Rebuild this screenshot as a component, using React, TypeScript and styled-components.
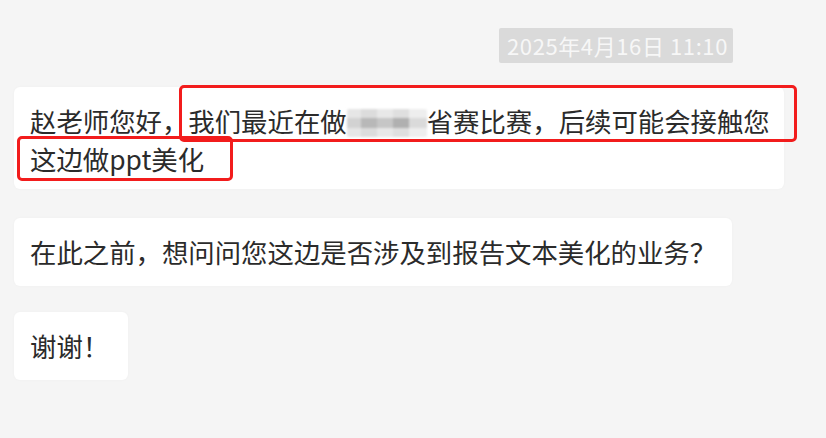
import React from "react";
import styled, { createGlobalStyle } from "styled-components";

const Global = createGlobalStyle`
  html, body { margin: 0; padding: 0; background: #f5f5f5; }
  body { font-family: "Noto Sans CJK SC", "Noto Sans", sans-serif; }
`;

const Page = styled.div`
  width: 826px;
  height: 438px;
  box-sizing: border-box;
  padding: 28px 0 0 14px;
  display: flex;
  flex-direction: column;
  align-items: flex-start;
  background: #f5f5f5;
  overflow: hidden;
`;

const TimeRow = styled.div`
  align-self: stretch;
  display: flex;
  justify-content: flex-end;
  padding-right: 93px;
  margin-bottom: 24px;
`;

const TimePill = styled.div`
  background: #dadada;
  color: #f7f7f7;
  font-size: 22px;
  letter-spacing: 0.6px;
  line-height: 35px;
  height: 35px;
  padding: 0 5px 0 8px;
  border-radius: 2px;
  white-space: nowrap;
`;

const Bubble = styled.div<{ $gap: number; $padR?: number; $padT?: number; $padB?: number }>`
  position: relative;
  background: #ffffff;
  border-radius: 6px;
  color: #2b2b2b;
  font-size: 26.4px;
  line-height: 38px;
  padding: ${(p) => p.$padT ?? 15}px ${(p) => p.$padR ?? 16}px ${(p) => p.$padB ?? 15}px 16px;
  margin-bottom: ${(p) => p.$gap}px;
  white-space: nowrap;
  box-shadow: 0 0 3px rgba(0, 0, 0, 0.03);
`;

const Mosaic = styled.span`
  display: inline-block;
  vertical-align: middle;
  width: 80px;
  height: 28px;
  margin-top: -4px;
  background:
    linear-gradient(90deg, #d2d2d2 0 14px, #b8b8b8 14px 30px, #c6c6c6 30px 46px, #b0b0b0 46px 62px, #dadada 62px 80px) 0 9px / 80px 10px no-repeat,
    linear-gradient(90deg, #e6e6e6 0 14px, #dcdcdc 14px 30px, #e8e8e8 30px 46px, #dfdfdf 46px 62px, #eeeeee 62px 80px) 0 0 / 80px 28px no-repeat;
  border-radius: 2px;
  filter: blur(0.8px);
`;

const Mark = styled.div<{ $l: number; $t: number; $w: number; $h: number }>`
  position: absolute;
  left: ${(p) => p.$l}px;
  top: ${(p) => p.$t}px;
  width: ${(p) => p.$w}px;
  height: ${(p) => p.$h}px;
  box-sizing: border-box;
  border: 3px solid #f21c1c;
  border-radius: 5px;
  pointer-events: none;
`;

export default function App() {
  return (
    <>
      <Global />
      <Page>
        <TimeRow>
          <TimePill>2025年4月16日 11:10</TimePill>
        </TimeRow>
        <Bubble $gap={29} $padT={15} $padB={11} $padR={14}>
          赵老师您好，我们最近在做<Mosaic aria-label="（已打码）" />省赛比赛，后续可能会接触您
          <br />
          这边做ppt美化
          <Mark $l={165} $t={-2} $w={618} $h={57} />
          <Mark $l={3} $t={49} $w={216} $h={45} />
        </Bubble>
        <Bubble $gap={26} $padR={16}>
          在此之前，想问问您这边是否涉及到报告文本美化的业务？
        </Bubble>
        <Bubble $gap={0} $padR={19}>
          谢谢！
        </Bubble>
      </Page>
    </>
  );
}
